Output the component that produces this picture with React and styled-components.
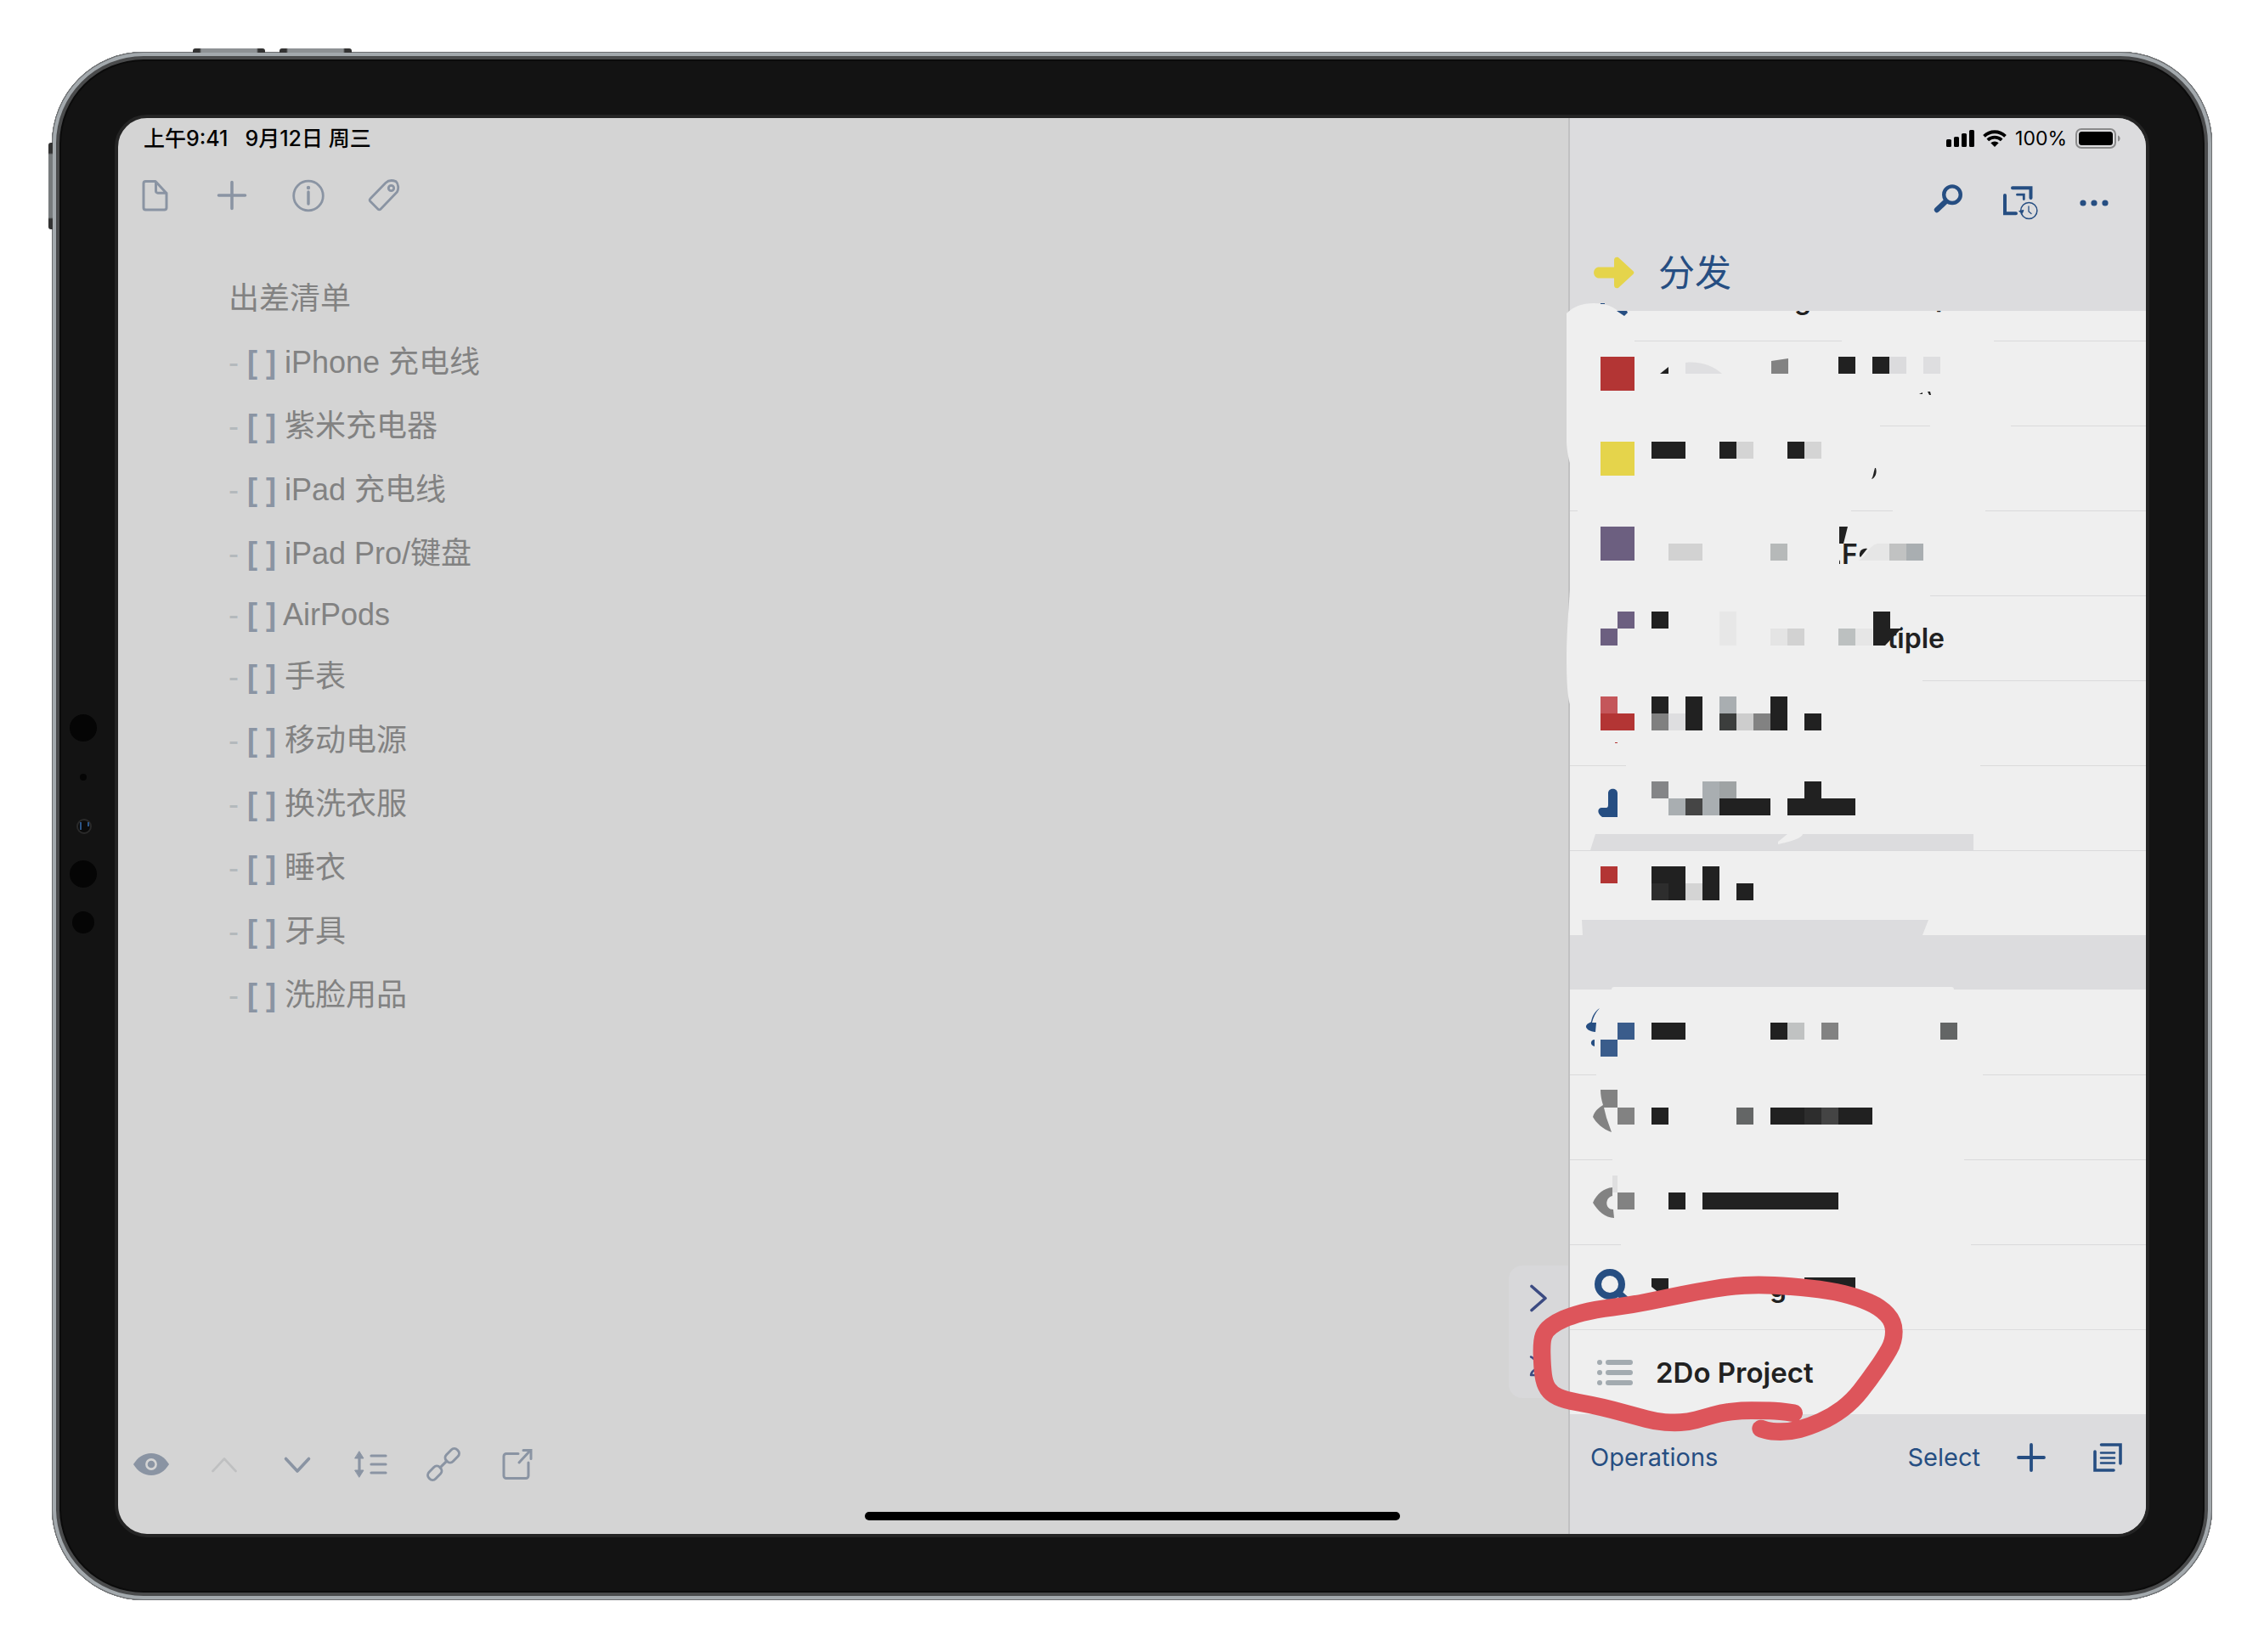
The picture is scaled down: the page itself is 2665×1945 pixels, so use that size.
import React from 'react'
import styled, { createGlobalStyle } from 'styled-components'

const BLUE = '#264e82'
const SLATE = '#8a94a3'
const INK = '#212121'
const PAPER = '#efefef'
const CHROME = '#dcdcde'
const RED = '#b33534'
const PURPLE = '#6c5f80'
const MARKER = '#dd555b'

const GlobalStyle = createGlobalStyle`
  * {
    box-sizing: border-box;
  }

  body {
    margin: 0;
    background: #fff;
    font-family: Inter, 'Noto Sans CJK SC', sans-serif;
  }
`

const Page = styled.main`
  min-height: 100vh;
  padding: 61px 61px 60px;
`

const Device = styled.div`
  position: relative;
  padding: 74px;
  border-radius: 108px;
  background: #131313;
  box-shadow: inset 0 0 0 1px #6c6e70, inset 0 0 0 5px #a3a9ad,
    inset 0 0 0 9px #4a4b4c, inset 0 0 0 11px #0b0b0b;
`

const TopKey = styled.span`
  position: absolute;
  top: -4px;
  left: ${(p) => p.$left}px;
  width: 85px;
  height: 5px;
  border-radius: 3px 3px 0 0;
  background: linear-gradient(90deg, #333 8px, #8d9194 10px 75px, #333 77px);
`

const SideKey = styled.span`
  position: absolute;
  top: 107px;
  left: -4px;
  width: 5px;
  height: 102px;
  border-radius: 3px 0 0 3px;
  background: linear-gradient(#333 12px, #777b7d 14px 88px, #333 90px);
`

const Sensors = styled.svg`
  position: absolute;
  left: 20px;
  top: 50%;
  width: 34px;
  height: 264px;
  margin-top: -132px;
`

const Screen = styled.div`
  position: relative;
  display: flex;
  overflow: hidden;
  border: 4px solid #242424;
  border-radius: 38px;
  background: #d4d4d4;
`

const HomeBar = styled.div`
  position: absolute;
  left: 50%;
  bottom: 16px;
  width: 630px;
  height: 10px;
  margin-left: -315px;
  border-radius: 5px;
  background: #000;
`

const Editor = styled.section`
  position: relative;
  flex: 1;
  display: flex;
  flex-direction: column;
  min-width: 0;
`

const StatusBar = styled.div`
  display: flex;
  align-items: center;
  justify-content: ${(p) => (p.$end ? 'flex-end' : 'flex-start')};
  gap: ${(p) => (p.$end ? 10 : 20)}px;
  height: 48px;
  padding: 0 30px;
  color: #000;
  font-size: 25px;
  font-weight: 500;
  line-height: 32px;
  white-space: nowrap;
`

const Percent = styled.span`
  font-size: 23px;
  font-weight: 400;
`

const Toolbar = styled.div`
  display: flex;
  align-items: center;
  gap: 50px;
  height: 86px;
  padding: 0 24px;
  color: ${SLATE};
`

const BottomTools = styled.div`
  display: flex;
  gap: 42px;
  margin-top: auto;
  padding: 0 17px 60px;
  color: ${SLATE};
`

const IconButton = styled.button`
  flex: none;
  width: ${(p) => p.$size || 44}px;
  height: ${(p) => p.$size || 44}px;
  padding: 0;
  border: 0;
  background: none;
  color: ${(p) => (p.$faint ? '#bfc0c1' : 'inherit')};

  svg {
    display: block;
    width: 100%;
    height: 100%;
  }
`

const Note = styled.article`
  padding: 41px 40px 0 130px;
  color: #828282;
  font-family: 'Liberation Sans', 'Noto Sans CJK SC', sans-serif;
  font-size: 36px;
`

const NoteTitle = styled.h1`
  margin: 0;
  font-size: 36px;
  font-weight: 400;
  line-height: 75px;
`

const Checklist = styled.ul`
  margin: 0;
  padding: 0;
  list-style: none;
`

const CheckItem = styled.li`
  line-height: ${(p) => (p.$short ? 70 : 75)}px;
  white-space: pre;
`

const Dash = styled.span`
  color: #b4b9bc;
`

const Brackets = styled.b`
  color: ${SLATE};
  font-weight: 700;
`

const Handle = styled.div`
  position: absolute;
  right: 0;
  bottom: 160px;
  display: flex;
  flex-direction: column;
  align-items: center;
  justify-content: space-between;
  width: 70px;
  height: 156px;
  padding: 17px 0 14px;
  border-radius: 16px 0 0 16px;
  background: #d8d8da;
  color: #3c4b82;
`

const Sidebar = styled.aside`
  position: relative;
  flex: 0 0 680px;
  display: flex;
  flex-direction: column;
  border-left: 2px solid #c1c1c2;
  background: ${CHROME};
  color: ${BLUE};
`

const SidebarTools = styled.div`
  display: flex;
  align-items: center;
  justify-content: flex-end;
  gap: 42px;
  height: 104px;
  padding-right: 39px;
`

const SidebarTitle = styled.h2`
  display: flex;
  align-items: center;
  gap: 28px;
  height: 75px;
  margin: 0;
  padding: 0 28px 15px;
  font-size: 43px;
  font-weight: 400;
  line-height: 60px;
`

const Rows = styled.ul`
  margin: 0;
  padding: 0;
  list-style: none;
  background: ${PAPER};
`

const RowItem = styled.li`
  height: ${(p) => p.$height || 100}px;
`

const RowButton = styled.button`
  display: flex;
  align-items: center;
  width: 100%;
  height: 100%;
  padding: 0;
  border: 0;
  background: none;
  font: inherit;
`

const RowArt = styled.svg`
  display: block;
  width: 100%;
  height: 100%;

  text {
    font-family: Inter, sans-serif;
    font-size: 32px;
    font-weight: 600;
    fill: ${INK};
  }
`

const ProjectRow = styled(RowButton)`
  gap: 27px;
  padding: 0 32px;
  border-top: 1px solid ${CHROME};
  color: ${INK};
  font-size: 33px;
  font-weight: 600;
  line-height: 44px;
`

const SectionGap = styled.div`
  display: flex;
  align-items: flex-end;
  height: 64px;
`

const SectionEdge = styled.div`
  width: 403px;
  height: 3px;
  margin-left: 49px;
  border-radius: 3px 3px 0 0;
  background: ${PAPER};
`

const Footer = styled.footer`
  display: flex;
  align-items: center;
  gap: 38px;
  height: 141px;
  padding: 0 23px 40px 24px;
`

const FooterIcons = styled.div`
  display: flex;
  gap: 46px;
`

const TextButton = styled.button`
  margin-right: ${(p) => (p.$first ? 'auto' : 0)};
  padding: 0;
  border: 0;
  background: none;
  color: inherit;
  font: inherit;
  font-size: 29px;
  line-height: 40px;
`

const Smudge = styled.svg`
  position: absolute;
  left: -6px;
  top: 216px;
  width: 80px;
  height: 500px;
  pointer-events: none;
`

const Scribble = styled.svg`
  position: absolute;
  left: -88px;
  bottom: 97px;
  width: 500px;
  height: 230px;
  pointer-events: none;
`

const stroke = (width) => ({
  fill: 'none',
  stroke: 'currentColor',
  strokeWidth: width,
  strokeLinecap: 'round',
  strokeLinejoin: 'round',
})

const DocIcon = () => (
  <svg viewBox="0 0 40 40" {...stroke(3)}>
    <path d="M8.5 3.4H20L33 17.5V34.5a2.6 2.6 0 0 1-2.6 2.6H8.500A2.600 2.600 0 0 1 6 34.500V6a2.600 2.600 0 0 1 2.500-2.600zM20.500 4V15a2.200 2.200 0 0 0 2.200 2.200H33" />
  </svg>
)

const PlusIcon = () => (
  <svg viewBox="0 0 40 40" {...stroke(3.6)}>
    <path d="M20 4.500v31M4.500 20h31" />
  </svg>
)

const AddIcon = () => (
  <svg viewBox="0 0 44 44" {...stroke(3.8)}>
    <path d="M22 7v30M7 22h30" />
  </svg>
)

const InfoIcon = () => (
  <svg viewBox="0 0 40 40" {...stroke(2.8)}>
    <circle cx="20" cy="20.500" r="17.300" />
    <path d="M20 16v14" strokeWidth="3.400" />
    <circle cx="20" cy="11" r="2.200" fill="currentColor" stroke="none" />
  </svg>
)

const TagIcon = () => (
  <svg viewBox="0 0 40 40" {...stroke(2.8)}>
    <path d="M21 5.200C24 2.400 29 2 33 3.600c3 3 3.600 8.600 1.400 12.400L15 36.200a2 2 0 0 1-3 0L2.800 27a2 2 0 0 1 0-3z" />
    <circle cx="27.500" cy="11.500" r="3.200" />
  </svg>
)

const EyeIcon = () => (
  <svg viewBox="0 0 44 44">
    <path
      d="M1 22C6 14 13 9 22 9s16 5 21 13C38 30 31 35 22 35S6 30 1 22z"
      fill="currentColor"
    />
    <circle cx="22" cy="22" r="5.6" fill="none" stroke="#d4d4d4" strokeWidth="2.6" />
  </svg>
)

const UpIcon = () => (
  <svg viewBox="0 0 44 44" {...stroke(2.6)}>
    <path d="M8.500 30 22 15.500 35.500 30" />
  </svg>
)

const DownIcon = () => (
  <svg viewBox="0 0 44 44" {...stroke(3.600)}>
    <path d="M8.500 15.500 22 30 35.500 15.500" />
  </svg>
)

const SpacingIcon = () => (
  <svg viewBox="0 0 44 44" {...stroke(3.2)}>
    <path d="M9 12v21M23 12h17M23 22h17M23 32h17" />
    <path d="M9 7 14 15H4zM9 37 14 29H4z" fill="currentColor" strokeWidth="1" />
  </svg>
)

const LinkIcon = () => (
  <svg viewBox="0 0 44 44" {...stroke(3)}>
    <g transform="rotate(-45 22 22)">
      <rect x="-1.500" y="16.500" width="18" height="11" rx="5" />
      <rect x="27.500" y="16.500" width="18" height="11" rx="5" />
      <path d="M16.500 22h11" />
    </g>
  </svg>
)

const ShareIcon = () => (
  <svg viewBox="0 0 44 44" {...stroke(3)}>
    <path d="M24 9.500H10a3 3 0 0 0-3 3v23a3 3 0 0 0 3 3h23a3 3 0 0 0 3-3V20" />
    <path d="M25 20 37 7" />
    <path d="M30 5.500h9v10" strokeLinejoin="miter" />
  </svg>
)

const SearchIcon = () => (
  <svg viewBox="0 0 44 44" {...stroke(4.4)}>
    <circle cx="27" cy="12.200" r="9.800" />
    <path d="M18.500 21 9 30" strokeWidth="6.400" />
  </svg>
)

const HistoryIcon = () => (
  <svg viewBox="0 0 44 44" {...stroke(4)} strokeLinejoin="miter">
    <path d="M12 4.200H33.500V16M3 13V34.200H16" />
    <path d="M17.500 12.200H25.300V17.500" strokeWidth="2.800" />
    <circle cx="31.300" cy="31" r="9.600" strokeWidth="1.500" />
    <path d="M31 26v6l3 2.500" strokeWidth="1.300" />
    <path d="M20 31.500 25 30.500 23.500 34z" fill="currentColor" strokeWidth="1" />
  </svg>
)

const DotsIcon = () => (
  <svg viewBox="0 0 44 44" fill="currentColor">
    <circle cx="9" cy="22" r="3.600" />
    <circle cx="22" cy="22" r="3.600" />
    <circle cx="35" cy="22" r="3.600" />
  </svg>
)

const ArrowIcon = () => (
  <svg width="48" height="38" viewBox="0 0 48 38" fill="#e5d44b">
    <path d="M5 12.500H24V4C24 .8 28-.4 30 2L46.500 17.300a2.400 2.400 0 0 1 0 3.400L30 36c-2 2.400-6 1.200-6-2V25.500H5C-1.600 24-1.600 14 5 12.500z" />
  </svg>
)

const SignalIcon = () => (
  <svg width="33" height="20" viewBox="0 0 33 20">
    <rect x="0" y="11" width="6" height="9" rx="1.500" />
    <rect x="9" y="8" width="6" height="12" rx="1.500" />
    <rect x="18" y="4" width="6" height="16" rx="1.500" />
    <rect x="27" y="0" width="6" height="20" rx="1.500" />
  </svg>
)

const WifiIcon = () => (
  <svg width="28" height="20" viewBox="0 0 28 20">
    <path d="M14 20 9.300 15.300a7 7 0 0 1 9.400 0z" />
    <path
      d="M1.500 7.300a18 18 0 0 1 25 0M5.800 11.800a12 12 0 0 1 16.400 0"
      fill="none"
      stroke="#000"
      strokeWidth="3.800"
    />
  </svg>
)

const BatteryIcon = () => (
  <svg width="53" height="24" viewBox="0 0 53 24">
    <rect x="1" y="1" width="46" height="22" rx="6" fill="none" stroke="#8a8a8b" strokeWidth="2" />
    <rect x="4" y="4" width="40" height="16" rx="3.500" />
    <path d="M50 8.500c3.500 1 3.500 6 0 7z" fill="#8a8a8b" />
  </svg>
)

const ListIcon = () => (
  <svg width="42" height="30" viewBox="0 0 42 30" fill="#a3abb0">
    {[0, 12, 24].map((y) => (
      <React.Fragment key={y}>
        <circle cx="3" cy={y + 3} r="3" />
        <rect x="10" y={y} width="32" height="6" rx="3" />
      </React.Fragment>
    ))}
  </svg>
)

const PagesIcon = () => (
  <svg viewBox="0 0 44 44" {...stroke(3.600)} strokeLinejoin="miter">
    <path d="M14.500 7H37V29M7 15V37H29" />
    <path d="M14 16.500H30M14 22.500H30M14 28.500H30" strokeWidth="2.600" />
  </svg>
)

const ChevronIcon = () => (
  <svg width="40" height="44" viewBox="0 0 40 44" {...stroke(3.600)}>
    <path d="M12 7.500 28 21.500 12 35.500" />
  </svg>
)

const DoubleIcon = () => (
  <svg width="40" height="44" viewBox="0 0 40 44" {...stroke(2.400)}>
    <path d="M11 9.500c3 1 4 4 8 6M11 31c1-6 4-5 8-9M11 31h8" />
  </svg>
)

// A cell is [column, line, colour, columns, lines] on a 20px grid.
// Rules are the pieces of the separator that are left, [from, to].
const TOP_ROWS = [
  {
    name: 'row 1',
    rules: [[76, 320], [499]],
    cells: [
      [0, 0, RED, 2, 2],
      [14, 0, INK],
      [16, 0, INK],
      [17, 0, '#dbdbdd'],
      [19, 0, '#dedee0'],
    ],
    art: (
      <>
        <path d="M106 39 116 31V39z" fill={INK} />
        <path d="M136 26c16-2 32 3 43 13H136z" fill="#dfdfe1" />
        <path d="M237 24 257 21V39H237z" fill="#828282" />
        <path d="M411 63l4-2v2zM421 60h3l1 4h-2z" fill={INK} />
      </>
    ),
  },
  {
    name: 'row 2',
    rules: [[365, 424], [519]],
    cells: [
      [0, 0, '#e5d44b', 2, 2],
      [3, 0, INK, 2],
      [7, 0, INK],
      [8, 0, '#d4d4d4'],
      [11, 0, INK],
      [12, 0, '#d4d4d4'],
    ],
    art: <path d="M360 50c2 6-1 12-5 13 2-3 2-6 4-13z" fill={INK} />,
  },
  {
    name: 'row 3',
    rules: [[0, 9], [331, 380], [489]],
    cells: [
      [0, 0, PURPLE, 2, 2],
      [4, 1, '#d2d2d2', 2],
      [10, 1, '#b6b9b9'],
      [17, 1, '#c1c2c2'],
      [18, 1, '#a9aeb1'],
    ],
    art: (
      <>
        <path d="M317 19H327L322 39H317z" fill={INK} />
        <path d="M317 63v-3l1-2v5z" fill={INK} />
        <text x="320" y="63">
          F
        </text>
        <path d="M341 54c-1-6 3-10 9-9l-8 10z" fill={INK} />
        <path d="M339 59C350 56 350 42 362 39H376V59z" fill="#e6e6e6" />
      </>
    ),
  },
  {
    name: 'row 4',
    rules: [[424]],
    cells: [
      [1, 0, PURPLE],
      [0, 1, PURPLE],
      [3, 0, INK],
      [7, 0, '#e7e7e7', 1, 2],
      [10, 1, '#e4e4e4'],
      [11, 1, '#d2d2d2'],
      [14, 1, '#bcc0c0'],
      [15, 1, '#e6e6e6'],
    ],
    art: (
      <>
        <text x="374" y="62">
          tiple
        </text>
        <path d="M374 36H391L372 58H370z" fill={PAPER} />
        <path d="M357 19H377V39H390L371 59H357z" fill={INK} />
      </>
    ),
  },
  {
    name: 'row 5',
    rules: [[415]],
    cells: [
      [0, 0, '#c4565a'],
      [0, 1, RED, 2],
      [3, 0, INK],
      [5, 0, INK, 1, 2],
      [7, 0, '#a9aeb1'],
      [10, 0, INK, 1, 2],
      [3, 1, '#808080'],
      [4, 1, '#dedee0'],
      [7, 1, '#3c3e3d'],
      [8, 1, '#cdcdcd'],
      [9, 1, '#828282'],
      [12, 1, INK],
    ],
    art: <rect x="53" y="73" width="3" height="1" fill={RED} />,
  },
  {
    name: 'row 6',
    rules: [[0, 66], [483]],
    cells: [
      [3, 0, '#848587'],
      [6, 0, '#a9aeb1', 1, 2],
      [7, 0, '#9fa3a4'],
      [12, 0, INK],
      [4, 1, '#a9aeb1'],
      [5, 1, '#454545'],
      [7, 1, INK, 3],
      [11, 1, INK, 4],
    ],
    art: (
      <>
        <path d="M45 33c0-7 11-7 11 0V61H38c-8-6-4-12 0-11h5c2 0 2-3 2-4z" fill={BLUE} />
        <path d="M30 81H256l-11 9v3c14-3 28-7 29-12H475V100H24z" fill={CHROME} />
      </>
    ),
  },
  {
    name: 'row 7',
    rules: [[0]],
    cells: [
      [0, 0, RED],
      [3, 0, INK, 2],
      [6, 0, INK, 1, 2],
      [3, 1, '#2d2d2d'],
      [4, 1, INK],
      [5, 1, '#d4d4d4'],
      [8, 1, INK],
    ],
    art: <path d="M14 82H422L415 100H15z" fill={CHROME} />,
  },
]

const BOTTOM_ROWS = [
  {
    name: 'row 8',
    rules: [],
    cells: [
      [1, 1, '#3a5c8b'],
      [0, 2, '#3a5c8b'],
      [3, 1, INK, 2],
      [10, 1, INK],
      [11, 1, '#c0c2c2'],
      [13, 1, '#828282'],
      [20, 1, '#636565'],
    ],
    art: (
      <>
        <path d="M35 22C30 27 27 34 26 39h5l-1 11C24 50 18 46 19 43c1-3 5-4 6-5 1-6 4-12 10-16z" fill={BLUE} />
        <path d="M29 59v8c-6-1-5-8 0-8z" fill={BLUE} />
      </>
    ),
  },
  {
    name: 'row 9',
    rules: [[0, 31], [486]],
    cells: [
      [1, 1, '#828282'],
      [3, 1, INK],
      [8, 1, '#646666'],
      [10, 1, INK, 2],
      [12, 1, '#2d2d2d'],
      [13, 1, '#444'],
      [14, 1, INK, 2],
    ],
    art: (
      <path d="M36 18H56V39H40L43 51 49 68C39 65 30 56 27 50c2-7 7-11 12-14-2-6-3-12-3-18z" fill="#828282" />
    ),
  },
  {
    name: 'row 10',
    rules: [[0, 50], [464]],
    cells: [
      [1, 1, '#828282'],
      [4, 1, INK],
      [6, 1, INK, 8],
    ],
    art: (
      <>
        <rect x="50" y="19" width="6" height="20" fill="#dfdfe0" />
        <path d="M50 33V43C41 45 41 59 51 59L52 69C42 69 32 60 27 51c5-11 13-17 23-18z" fill="#828282" />
      </>
    ),
  },
  {
    name: 'row 11',
    rules: [[0, 60], [472]],
    cells: [[12, 1, INK, 3]],
    art: (
      <>
        <path d="M96 40H116V58H106L96 50z" fill={INK} />
        <circle cx="47" cy="47" r="14" fill="none" stroke={BLUE} strokeWidth="8" />
        <path d="M57 57 68 67" stroke={BLUE} strokeWidth="8" />
        <text x="235" y="62">
          g
        </text>
      </>
    ),
  },
]

const NOTES = [
  'iPhone 充电线',
  '紫米充电器',
  'iPad 充电线',
  'iPad Pro/键盘',
  'AirPods',
  '手表',
  '移动电源',
  '换洗衣服',
  '睡衣',
  '牙具',
  '洗脸用品',
]

const LOOP = [
  [1055, 554], [1000, 546], [940, 545], [870, 545], [800, 553], [740, 570],
  [680, 586], [630, 588], [570, 585], [500, 566], [420, 544], [340, 525],
  [245, 508], [198, 486], [174, 450], [166, 390], [164, 300], [178, 262],
  [218, 232], [265, 212], [350, 188], [480, 173], [600, 148], [720, 124],
  [830, 106], [930, 100], [1040, 106], [1180, 120], [1280, 145], [1360, 180],
  [1408, 232], [1408, 300], [1374, 360], [1320, 438], [1262, 512], [1190, 566],
  [1110, 602], [1040, 620], [975, 620], [938, 609],
]

// Runs a curve through the midpoints of the given points.
const smooth = (points) => {
  const [first, ...rest] = points
  const last = points[points.length - 1]
  const curves = rest.slice(0, -1).map(([x, y], i) => {
    const [nx, ny] = rest[i + 1]
    return `Q${x} ${y} ${(x + nx) / 2} ${(y + ny) / 2}`
  })
  return `M${first.join(' ')}${curves.join('')}L${last.join(' ')}`
}

function Row({ name, rules, cells, art }) {
  return (
    <RowItem>
      <RowButton aria-label={name}>
        <RowArt>
          {rules.map(([from, to]) => (
            <rect
              key={from}
              x={from}
              width={to ? to - from : '100%'}
              height="1"
              fill="#dadadb"
            />
          ))}
          {cells.map(([col, line, fill, w = 1, h = 1]) => (
            <rect
              key={`${col}-${line}`}
              x={36 + col * 20}
              y={19 + line * 20}
              width={w * 20}
              height={h * 20}
              fill={fill}
            />
          ))}
          {art}
        </RowArt>
      </RowButton>
    </RowItem>
  )
}

export default function App() {
  return (
    <Page>
      <GlobalStyle />
      <Device>
        <TopKey $left={166} />
        <TopKey $left={268} />
        <SideKey />
        <Sensors viewBox="0 0 34 264" fill="#050505">
          <circle cx="17" cy="16" r="16" />
          <circle cx="17" cy="74" r="4" />
          <circle cx="18" cy="132" r="8" fill="#0b0b0b" stroke="#2a2a2a" strokeWidth="2" />
          <path d="M14 127v9M23 127v5" stroke="#2c5588" strokeWidth="2" />
          <circle cx="17" cy="188" r="16" />
          <circle cx="17" cy="245" r="13" />
        </Sensors>

        <Screen>
          <Editor>
            <StatusBar>
              <span>上午9:41</span>
              <span>9月12日 周三</span>
            </StatusBar>
            <Toolbar>
              <IconButton $size={40} aria-label="Document">
                <DocIcon />
              </IconButton>
              <IconButton $size={40} aria-label="New">
                <PlusIcon />
              </IconButton>
              <IconButton $size={40} aria-label="Info">
                <InfoIcon />
              </IconButton>
              <IconButton $size={40} aria-label="Tag">
                <TagIcon />
              </IconButton>
            </Toolbar>
            <Note>
              <NoteTitle>出差清单</NoteTitle>
              <Checklist>
                {NOTES.map((text) => (
                  <CheckItem key={text} $short={text === 'AirPods'}>
                    <Dash>- </Dash>
                    <Brackets>[ ]</Brackets> {text}
                  </CheckItem>
                ))}
              </Checklist>
            </Note>
            <BottomTools>
              <IconButton aria-label="Preview">
                <EyeIcon />
              </IconButton>
              <IconButton $faint aria-label="Previous">
                <UpIcon />
              </IconButton>
              <IconButton aria-label="Next">
                <DownIcon />
              </IconButton>
              <IconButton aria-label="Arrange">
                <SpacingIcon />
              </IconButton>
              <IconButton aria-label="Link">
                <LinkIcon />
              </IconButton>
              <IconButton aria-label="Open">
                <ShareIcon />
              </IconButton>
            </BottomTools>
            <Handle>
              <ChevronIcon />
              <DoubleIcon />
            </Handle>
          </Editor>

          <Sidebar>
            <StatusBar $end>
              <SignalIcon />
              <WifiIcon />
              <Percent>100%</Percent>
              <BatteryIcon />
            </StatusBar>
            <SidebarTools>
              <IconButton aria-label="Search">
                <SearchIcon />
              </IconButton>
              <IconButton aria-label="History">
                <HistoryIcon />
              </IconButton>
              <IconButton aria-label="More">
                <DotsIcon />
              </IconButton>
            </SidebarTools>
            <SidebarTitle>
              <ArrowIcon />
              分发
            </SidebarTitle>
            <Rows>
              <RowItem $height={35}>
                <RowArt>
                  <text x="264" y="-2">
                    g
                  </text>
                  <text x="430" y="-5">
                    p
                  </text>
                </RowArt>
              </RowItem>
              {TOP_ROWS.map((row) => (
                <Row key={row.name} {...row} />
              ))}
            </Rows>
            <SectionGap>
              <SectionEdge />
            </SectionGap>
            <Rows>
              {BOTTOM_ROWS.map((row) => (
                <Row key={row.name} {...row} />
              ))}
              <RowItem>
                <ProjectRow>
                  <ListIcon />
                  2Do Project
                </ProjectRow>
              </RowItem>
            </Rows>
            <Footer>
              <TextButton $first>Operations</TextButton>
              <TextButton>Select</TextButton>
              <FooterIcons>
                <IconButton aria-label="Add">
                  <AddIcon />
                </IconButton>
                <IconButton aria-label="Pages">
                  <PagesIcon />
                </IconButton>
              </FooterIcons>
            </Footer>
            <Smudge viewBox="0 0 80 500">
              <path
                d="M2 14C10 6 20 2 34 2c14 0 24 4 32 12V24H6V190C4 184 2 172 2 164z"
                fill={PAPER}
              />
              <path d="M42 2h5v1h-5zM61 11H73L74 13 70 17z" fill={BLUE} />
              <path d="M6 340C3 380 2 400 2 420c0 24 1 46 4 54z" fill={PAPER} />
            </Smudge>
            <Scribble viewBox="0 0 1500 690">
              <path d={smooth(LOOP)} {...stroke(62)} stroke={MARKER} />
            </Scribble>
          </Sidebar>
          <HomeBar />
        </Screen>
      </Device>
    </Page>
  )
}
